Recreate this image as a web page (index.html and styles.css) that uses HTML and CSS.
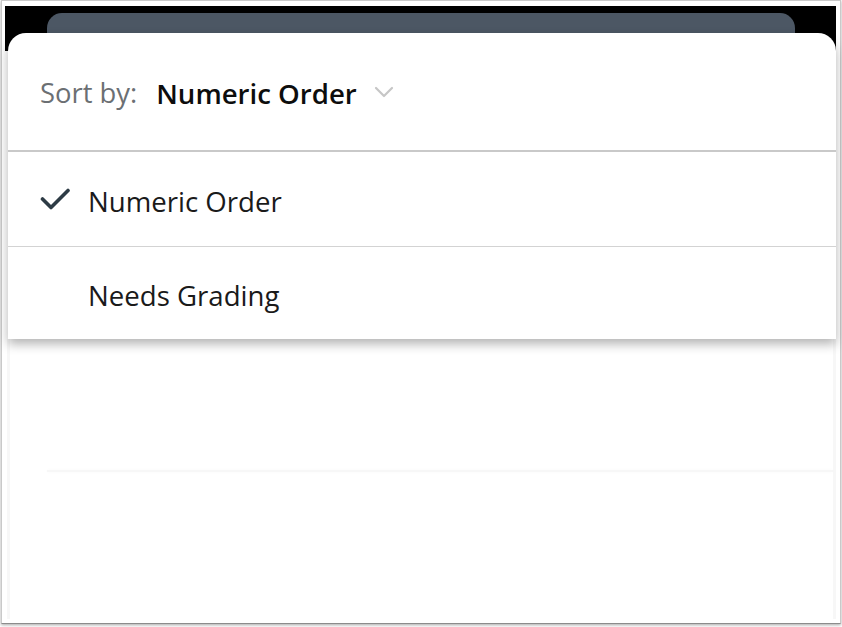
FILE: index.html
```html
<!DOCTYPE html>
<html>
<head>
<meta charset="utf-8">
<link rel="stylesheet" href="styles.css">
</head>
<body>
<div class="frame">
  <div class="screen">
    <div class="status">
      <div class="back-card"></div>
    </div>
    <div class="sheet">
      <div class="sheet-header">
        <span class="sort-label">Sort by:</span>
        <span class="sort-value">Numeric Order</span>
        <svg class="chevron" width="20" height="12" viewBox="0 0 20 12"><path d="M2 2 L10 10 L18 2" fill="none" stroke="#c6c6c6" stroke-width="2.2" stroke-linecap="round" stroke-linejoin="round"/></svg>
      </div>
      <div class="option">
        <span class="check-slot"><svg width="30" height="22" viewBox="0 0 30 22"><path d="M2.5 11 L11 19.5 L28 2.5" fill="none" stroke="#2d3b45" stroke-width="3.6" stroke-linecap="round" stroke-linejoin="round"/></svg></span>
        <span class="option-text">Numeric Order</span>
      </div>
      <div class="option last">
        <span class="check-slot"></span>
        <span class="option-text">Needs Grading</span>
      </div>
    </div>
    <div class="behind">
      <div class="ghost-line"></div>
    </div>
  </div>
</div>
</body>
</html>
```

FILE: styles.css
```css
html, body {
  margin: 0;
  padding: 0;
  background: #ffffff;
}
body {
  width: 842px;
  height: 627px;
  overflow: hidden;
  font-family: "Open Sans", "Noto Sans", sans-serif;
}
.frame {
  box-sizing: border-box;
  width: 840px;
  height: 624px;
  margin: 0 1px;
  border: 1px solid #c9c9c9;
  border-bottom-color: #8c8c8c;
  box-shadow: 0 1px 3px rgba(0, 0, 0, 0.35);
  padding: 5px 4px 4px 3px;
  background: #fff;
}
.screen {
  height: 613px;
  display: flex;
  flex-direction: column;
  background: linear-gradient(#000 0, #000 45px, #fff 45px);
}
.status {
  height: 27px;
  flex: none;
  background: #000;
  display: flex;
  align-items: flex-end;
}
.back-card {
  margin-left: 42px;
  width: 748px;
  height: 20px;
  background: #4c5764;
  border-radius: 15px 15px 0 0;
}
.sheet {
  position: relative;
  z-index: 2;
  flex: none;
  margin-left: 3px;
  height: 306px;
  background: #fff;
  border-radius: 18px 18px 0 0;
  box-shadow: 0 5px 11px rgba(0, 0, 0, 0.3);
  display: flex;
  flex-direction: column;
}
.sheet-header {
  height: 119px;
  flex: none;
  box-sizing: border-box;
  border-bottom: 2px solid #c9c9c9;
  display: flex;
  align-items: center;
  padding-left: 32px;
  padding-top: 2px;
  font-size: 27.4px;
}
.sort-label {
  color: #6b6f73;
}
.sort-value {
  margin-left: 19px;
  font-weight: 600;
  font-size: 27.6px;
  color: #0d0d0d;
}
.chevron {
  margin-left: 17px;
  margin-top: -2px;
}
.option {
  height: 95px;
  flex: none;
  box-sizing: border-box;
  border-bottom: 1px solid #d3d3d3;
  display: flex;
  align-items: center;
  padding-left: 32px;
  font-size: 27.6px;
  color: #1a1a1a;
}
.option.last {
  border-bottom: none;
  height: 92px;
}
.check-slot {
  width: 48px;
  display: flex;
  align-items: center;
}
.check-slot svg {
  display: block;
}
.option-text {
  padding-top: 3px;
}
.behind {
  flex: 1;
  background: #fff;
  margin-left: 2px;
  border-left: 3px solid #f7f7f7;
  border-right: 3px solid #f7f7f7;
  padding-top: 131px;
  padding-left: 37px;
}
.ghost-line {
  height: 2px;
  background: #f7f7f7;
  box-shadow: 0 0 4px rgba(0, 0, 0, 0.03);
}
```
